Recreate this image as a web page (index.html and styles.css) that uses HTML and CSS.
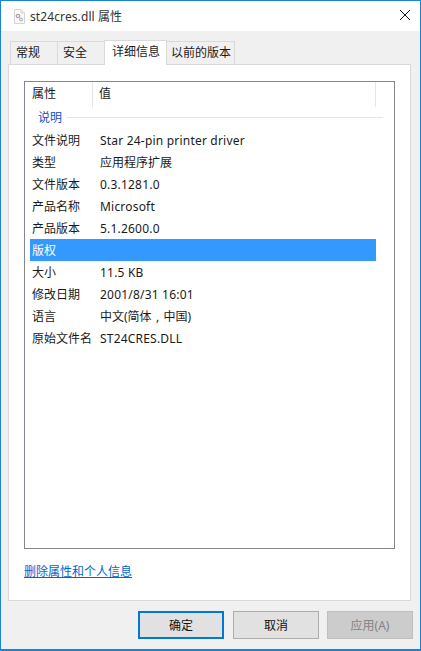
FILE: index.html
```html
<!DOCTYPE html>
<html lang="zh-CN">
<head>
    <meta charset="UTF-8">
    <title>st24cres.dll 属性</title>
    <link rel="stylesheet" href="styles.css">
</head>
<body>
    <div class="window">
        <!-- Title bar -->
        <div class="titlebar">
            <svg class="file-icon" width="16" height="16" viewBox="0 0 16 16">
                <path d="M3.5 1.5H10L13.5 5V15.5H3.5Z" fill="#fafafa" stroke="#d4d4d4"/>
                <path d="M10 1.5V5H13.5" fill="#ececec" stroke="#d4d4d4"/>
                <circle cx="7" cy="8" r="1.7" fill="none" stroke="#a6a9ad" stroke-width="1.3"/>
                <circle cx="10" cy="11.5" r="1.4" fill="none" stroke="#b4b7ba" stroke-width="1.1"/>
            </svg>
            <span class="title">st24cres.dll 属性</span>
            <svg class="close" width="12" height="12" viewBox="0 0 12 12">
                <path d="M1 1L11 11M11 1L1 11" stroke="#111" stroke-width="1" fill="none"/>
            </svg>
        </div>

        <div class="body">
            <!-- Tabs -->
            <div class="tabs">
                <div class="tab tab-general">常规</div>
                <div class="tab tab-security">安全</div>
                <div class="tab tab-active">详细信息</div>
                <div class="tab tab-previous">以前的版本</div>
            </div>

            <div class="panel">
                <div class="list">
                    <div class="list-header">
                        <div class="col-name">属性</div>
                        <div class="col-value">值</div>
                    </div>
                    <div class="group">
                        <span>说明</span>
                        <div class="group-line"></div>
                    </div>
                    <div class="row"><div class="name">文件说明</div><div class="value latin">Star 24-pin printer driver</div></div>
                    <div class="row"><div class="name">类型</div><div class="value">应用程序扩展</div></div>
                    <div class="row"><div class="name">文件版本</div><div class="value latin">0.3.1281.0</div></div>
                    <div class="row"><div class="name">产品名称</div><div class="value latin">Microsoft</div></div>
                    <div class="row"><div class="name">产品版本</div><div class="value latin">5.1.2600.0</div></div>
                    <div class="row selected"><div class="name">版权</div><div class="value"></div></div>
                    <div class="row"><div class="name">大小</div><div class="value latin">11.5 KB</div></div>
                    <div class="row"><div class="name">修改日期</div><div class="value latin">2001/8/31 16:01</div></div>
                    <div class="row"><div class="name">语言</div><div class="value">中文(简体<span class="comma">,</span>中国)</div></div>
                    <div class="row"><div class="name">原始文件名</div><div class="value latin">ST24CRES.DLL</div></div>
                </div>
                <a class="remove-link" href="#">删除属性和个人信息</a>
            </div>

            <!-- Buttons -->
            <div class="buttons">
                <button class="btn btn-default">确定</button>
                <button class="btn">取消</button>
                <button class="btn btn-disabled">应用(A)</button>
            </div>
        </div>
    </div>
</body>
</html>
```
FILE: styles.css
```css
* {
    box-sizing: border-box;
}

body {
    margin: 0;
    font-family: "Noto Sans", "Noto Sans CJK SC", sans-serif;
    font-size: 12px;
    color: #1a1a1a;
}

.window {
    width: 421px;
    height: 651px;
    border: 1px solid #1883d7;
    border-bottom-width: 2px;
    background-color: #f0f0f0;
    display: flex;
    flex-direction: column;
}

/* Title bar */
.titlebar {
    height: 30px;
    flex: none;
    background-color: #ffffff;
    display: flex;
    align-items: center;
    padding: 0 9px 0 10px;
}

.file-icon {
    margin-right: 3px;
}

.title {
    flex: 1;
    color: #333;
    letter-spacing: 0.1px;
}

.close {
    margin-bottom: 2px;
}

/* Tabs */
.body {
    flex: 1;
    padding: 9px 7px 0;
    display: flex;
    flex-direction: column;
}

.tabs {
    height: 24px;
    flex: none;
    display: flex;
    align-items: flex-end;
    padding-left: 2px;
    position: relative;
    z-index: 1;
}

.tab {
    height: 23px;
    border: 1px solid #d9d9d9;
    border-bottom: none;
    border-right: none;
    background-color: #f0f0f0;
    padding-left: 5px;
    line-height: 21px;
}

.tab-general {
    width: 47px;
}

.tab-security {
    width: 47px;
}

.tab-active {
    width: 63px;
    height: 25px;
    margin-bottom: -1px;
    background-color: #ffffff;
    border-right: 1px solid #d9d9d9;
    padding-left: 7px;
}

.tab-previous {
    width: 68px;
    border-left: none;
    border-right: 1px solid #d9d9d9;
    padding-left: 4px;
}

/* Panel */
.panel {
    height: 537px;
    flex: none;
    width: 403px;
    background-color: #ffffff;
    border: 1px solid #d9d9d9;
    padding: 16px 15px 0;
}

.list {
    width: 371px;
    height: 468px;
    border: 1px solid #828790;
    padding-right: 18px;
}

.list-header {
    height: 25px;
    display: flex;
    line-height: 24px;
}

.col-name {
    width: 68px;
    padding-left: 7px;
    border-right: 1px solid #e5e5e5;
}

.col-value {
    flex: 1;
    padding-left: 6px;
    border-right: 1px solid #e5e5e5;
}

.group {
    height: 22px;
    display: flex;
    align-items: center;
    padding: 0 0 2px 13px;
    color: #0f4fd0;
    margin-right: -7px;
}

.group-line {
    flex: 1;
    height: 1px;
    margin-left: 5px;
    background-color: #e2e3ef;
}

.row {
    height: 22px;
    display: flex;
    align-items: center;
    margin-left: 5px;
}

.name {
    width: 70px;
    padding-left: 2px;
    flex: none;
    white-space: nowrap;
}

.latin {
    letter-spacing: 0.2px;
}

.comma {
    display: inline-block;
    width: 12px;
    text-align: center;
}

.selected {
    background-color: #3399ff;
    color: #ffffff;
}

.remove-link {
    display: block;
    margin-top: 15px;
    width: 108px;
    color: #0066cc;
    line-height: 16px;
}

/* Buttons */
.buttons {
    display: flex;
    justify-content: flex-end;
    gap: 8px;
    padding-top: 10px;
}

.btn {
    width: 86px;
    height: 28px;
    padding: 0;
    font-family: inherit;
    font-size: 12px;
    color: #111;
    background-color: #e1e1e1;
    border: 1px solid #adadad;
}

.btn-default {
    border: 2px solid #0078d7;
    margin-right: 1px;
}

.btn-disabled {
    color: #838383;
    background-color: #cccccc;
    border-color: #bfbfbf;
}
```
